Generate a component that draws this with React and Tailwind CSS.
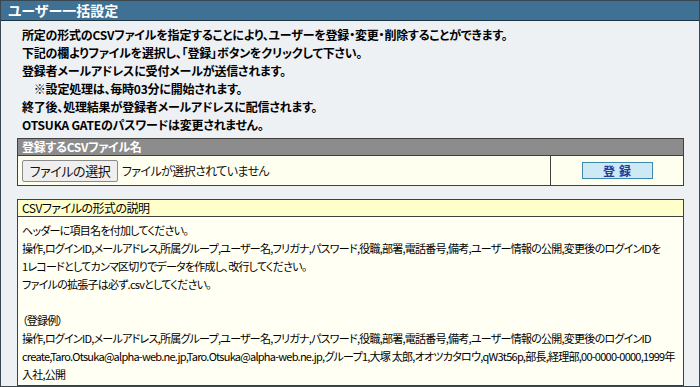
const jp = "font-['Noto_Sans_CJK_JP','Noto_Sans',sans-serif] [font-feature-settings:'palt']";

const intro = [
  '所定の形式のCSVファイルを指定することにより、ユーザーを登録・変更・削除することができます。',
  '下記の欄よりファイルを選択し、「登録」ボタンをクリックして下さい。',
  '登録者メールアドレスに受付メールが送信されます。',
  '\u3000※設定処理は、毎時03分に開始されます。',
  '終了後、処理結果が登録者メールアドレスに配信されます。',
  'OTSUKA GATEのパスワードは変更されません。',
];

const help = [
  'ヘッダーに項目名を付加してください。',
  '操作,ログインID,メールアドレス,所属グループ,ユーザー名,フリガナ,パスワード,役職,部署,電話番号,備考,ユーザー情報の公開,変更後のログインIDを',
  '1レコードとしてカンマ区切りでデータを作成し、改行してください。',
  'ファイルの拡張子は必ず.csvとしてください。',
  '',
  '（登録例）',
  '操作,ログインID,メールアドレス,所属グループ,ユーザー名,フリガナ,パスワード,役職,部署,電話番号,備考,ユーザー情報の公開,変更後のログインID',
  'create,Taro.Otsuka@alpha-web.ne.jp,Taro.Otsuka@alpha-web.ne.jp,グループ1,大塚 太郎,オオツカタロウ,qW3t56p,部長,経理部,00-0000-0000,1999年',
  '入社,公開',
];

export default function App() {
  return (
    <div className={`w-[700px] h-[387px] overflow-hidden border border-[#3a4650] bg-[#eef1f4] text-black ${jp}`}>
      <div className="h-[20px] bg-[#3e7193] border-b border-[#1c3342] px-[7px] text-white font-bold text-[14px] leading-[19px]">
        ユーザー一括設定
      </div>

      <div className="pl-[21px] pt-[5px] font-bold text-[12px] leading-[18px] tracking-[-0.2px] whitespace-pre">
        {intro.map((t) => (
          <div key={t}>{t}</div>
        ))}
      </div>

      {/* upload table */}
      <div className="ml-[16px] mt-[4px] w-[667px] border border-[#404040]">
        <div className="h-[17px] bg-[#8c8c8c] border-b border-[#404040] pl-[4px] text-white font-bold text-[12px] leading-[16px] tracking-[-0.3px]">
          登録するCSVファイル名
        </div>
        <div className="flex h-[29px] bg-[#fffff0]">
          <div className="flex-1 flex items-center pl-[4px] border-r border-[#404040]">
            <div className="h-[22px] w-[96px] flex items-center justify-center bg-[#efefef] border border-[#8a8a8a] rounded-[2px] text-[13px] tracking-[-0.4px] text-[#111]">
              ファイルの選択
            </div>
            <span className="ml-[4px] text-[12px] tracking-[-0.6px] text-[#111]">ファイルが選択されていません</span>
          </div>
          <div className="w-[132px] flex items-center justify-center">
            <button className="w-[71px] h-[17px] bg-[#cde9f5] border border-[#3b8aa9] text-[#233a96] font-bold text-[12px] leading-[14px] tracking-[4px] pl-[4px]">
              登録
            </button>
          </div>
        </div>
      </div>

      {/* format help */}
      <div className="ml-[16px] mt-[13px] w-[667px] border border-[#404040] bg-[#fffff4]">
        <div className="h-[17px] bg-[#ffffcc] border-b border-[#404040] pl-[4px] text-[12px] leading-[16px] tracking-[-0.5px]">
          CSVファイルの形式の説明
        </div>
        <div className="pl-[4px] pt-[4px] pb-[2px] text-[11px] leading-[18px] tracking-[-0.75px] whitespace-pre">
          {help.map((t, i) => (
            <div key={i} className="h-[18px]">{t}</div>
          ))}
        </div>
      </div>
    </div>
  );
}
